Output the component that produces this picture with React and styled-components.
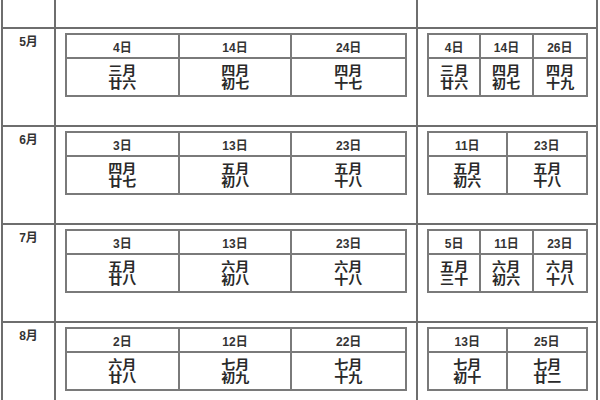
import styled, { createGlobalStyle } from "styled-components";

const GlobalStyle = createGlobalStyle`
  html, body {
    margin: 0;
    padding: 0;
    background: #ffffff;
    overflow: hidden;
  }
  body {
    font-family: "Liberation Sans", "Noto Sans CJK SC", sans-serif;
    color: #2a2a2a;
  }
`;

const Page = styled.div`
  width: 600px;
  height: 400px;
  overflow: hidden;
`;

const Sheet = styled.div`
  box-sizing: border-box;
  width: 597px;
  margin-left: 1px;
  margin-top: -69px;
  border-left: 2px solid #6e6e6e;
  border-right: 2px solid #6e6e6e;
`;

const Row = styled.div`
  box-sizing: border-box;
  height: 98px;
  display: grid;
  grid-template-columns: 53px 362px 1fr;
  border-bottom: 2px solid #6e6e6e;
`;

const MonthCell = styled.div`
  box-sizing: border-box;
  border-right: 2px solid #6e6e6e;
  padding-top: 6px;
  text-align: center;
  font-size: 12px;
  line-height: 14px;
  font-weight: bold;
  color: #333;
`;

const Slot = styled.div`
  box-sizing: border-box;
  padding: 4px ${(p) => p.$right}px 0 ${(p) => p.$left}px;
  border-right: ${(p) => (p.$divider ? "2px solid #6e6e6e" : "none")};
`;

const Inner = styled.div`
  box-sizing: border-box;
  height: 64px;
  display: grid;
  grid-template-columns: repeat(${(p) => p.$cols}, 1fr);
  grid-template-rows: 24px 36px;
  border: 2px solid #7a7a7a;
`;

const Head = styled.div`
  display: flex;
  align-items: center;
  justify-content: center;
  border-bottom: 2px solid #7a7a7a;
  border-right: ${(p) => (p.$last ? "none" : "2px solid #7a7a7a")};
  font-size: 12px;
  font-weight: bold;
  color: #333;
  padding-top: 1px;
`;

const Lunar = styled.div`
  box-sizing: border-box;
  padding-top: 4px;
  text-align: center;
  border-right: ${(p) => (p.$last ? "none" : "2px solid #7a7a7a")};
  font-family: "Noto Sans CJK SC", sans-serif;
  font-size: 13px;
  font-weight: 700;
  color: #2a2a2a;
`;

const LunarLine = styled.div`
  height: 13px;
  line-height: 13px;
  white-space: nowrap;
  transform: scaleX(1.08);
`;

const rows = [
  {
    month: "4月",
    mid: [["5日", "二月", "廿五"], ["15日", "三月", "初六"], ["25日", "三月", "十六"]],
    side: [["5日", "二月", "廿五"], ["15日", "三月", "初六"]],
  },
  {
    month: "5月",
    mid: [["4日", "三月", "廿六"], ["14日", "四月", "初七"], ["24日", "四月", "十七"]],
    side: [["4日", "三月", "廿六"], ["14日", "四月", "初七"], ["26日", "四月", "十九"]],
  },
  {
    month: "6月",
    mid: [["3日", "四月", "廿七"], ["13日", "五月", "初八"], ["23日", "五月", "十八"]],
    side: [["11日", "五月", "初六"], ["23日", "五月", "十八"]],
  },
  {
    month: "7月",
    mid: [["3日", "五月", "廿八"], ["13日", "六月", "初八"], ["23日", "六月", "十八"]],
    side: [["5日", "五月", "三十"], ["11日", "六月", "初六"], ["23日", "六月", "十八"]],
  },
  {
    month: "8月",
    mid: [["2日", "六月", "廿八"], ["12日", "七月", "初九"], ["22日", "七月", "十九"]],
    side: [["13日", "七月", "初十"], ["25日", "七月", "廿二"]],
  },
];

const DayTable = ({ days }) => (
  <Inner $cols={days.length}>
    {days.map((d, i) => (
      <Head key={"h" + i} $last={i === days.length - 1}>
        {d[0]}
      </Head>
    ))}
    {days.map((d, i) => (
      <Lunar key={"b" + i} $last={i === days.length - 1}>
        <LunarLine>{d[1]}</LunarLine>
        <LunarLine>{d[2]}</LunarLine>
      </Lunar>
    ))}
  </Inner>
);

const App = () => {
  return (
    <>
      <GlobalStyle />
      <Page>
        <Sheet>
          {rows.map((r) => (
            <Row key={r.month}>
              <MonthCell>{r.month}</MonthCell>
              <Slot $left={9} $right={9} $divider>
                <DayTable days={r.mid} />
              </Slot>
              <Slot $left={9} $right={8}>
                <DayTable days={r.side} />
              </Slot>
            </Row>
          ))}
        </Sheet>
      </Page>
    </>
  );
};

export default App;
